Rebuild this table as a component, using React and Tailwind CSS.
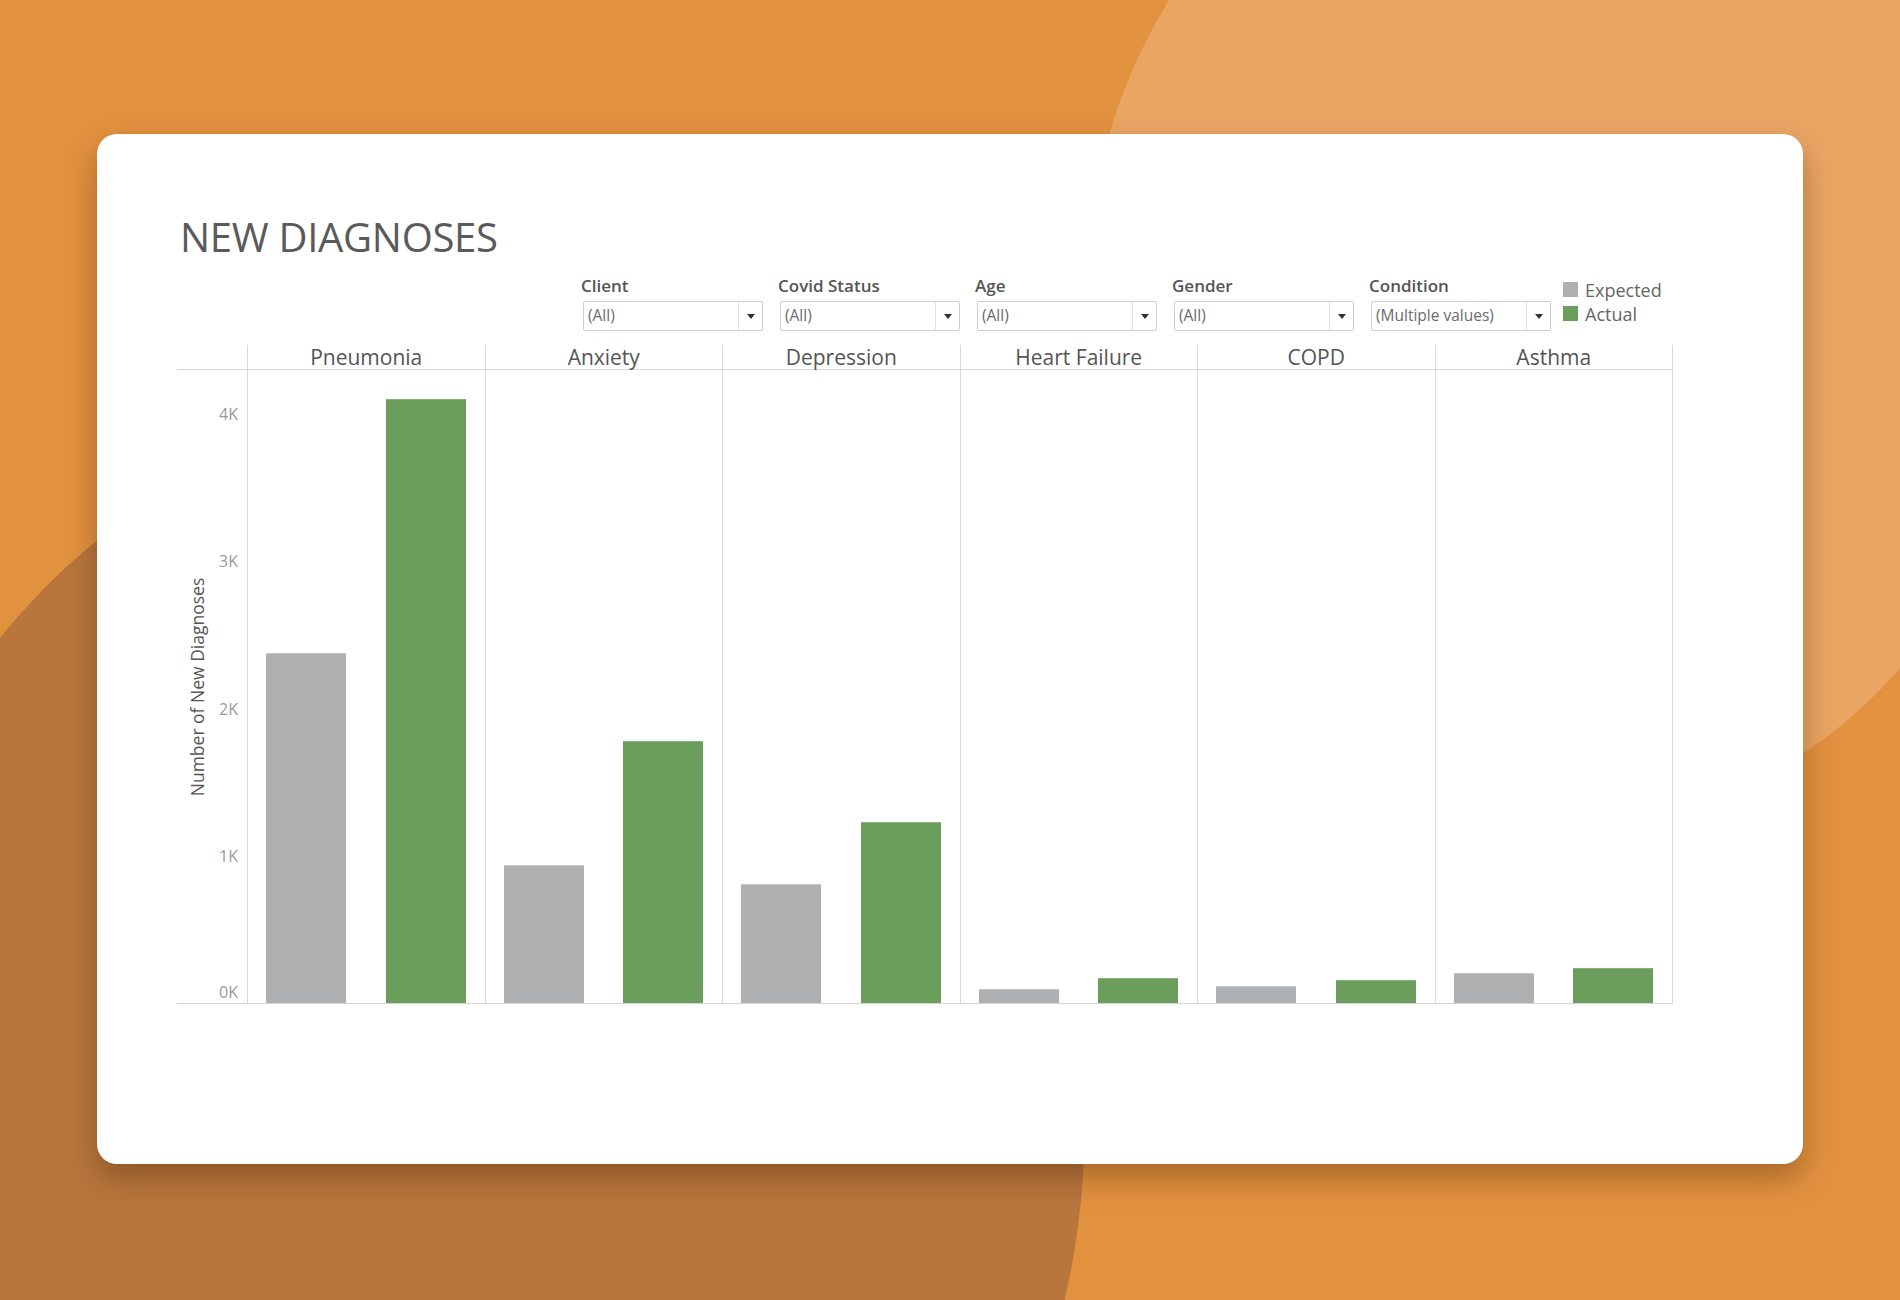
import React from 'react';

// px per 1K on the value axis
const SCALE = 147.2;

const panes = [
  { name: 'Pneumonia', expected: 2378, actual: 4103 },
  { name: 'Anxiety', expected: 938, actual: 1780 },
  { name: 'Depression', expected: 808, actual: 1230 },
  { name: 'Heart Failure', expected: 95, actual: 170 },
  { name: 'COPD', expected: 115, actual: 156 },
  { name: 'Asthma', expected: 204, actual: 238 },
];

const filters = [
  { label: 'Client', value: '(All)' },
  { label: 'Covid Status', value: '(All)' },
  { label: 'Age', value: '(All)' },
  { label: 'Gender', value: '(All)' },
  { label: 'Condition', value: '(Multiple values)' },
];

const ticks = [
  { label: '4K', bottom: 4 * SCALE - 8 },
  { label: '3K', bottom: 3 * SCALE - 8 },
  { label: '2K', bottom: 2 * SCALE - 8 },
  { label: '1K', bottom: 1 * SCALE - 8 },
  { label: '0K', bottom: 3 },
];

const Filter = ({ label, value }) => (
  <div className="w-[182px] flex flex-col">
    <div className="text-[17px] leading-none h-[15px] font-semibold text-[#555] whitespace-nowrap">{label}</div>
    <div className="ml-[2px] mt-[9px] h-[30px] flex items-stretch border border-[#cfcfcf] rounded-[2px] bg-white">
      <div className="flex-1 flex items-center pl-[4px] text-[15.5px] text-[#6b6b6b] whitespace-nowrap">{value}</div>
      <div className="w-[24px] border-l border-[#e2e2e2] flex items-center justify-center">
        <div className="w-0 h-0 border-l-[4px] border-r-[4px] border-t-[5px] border-l-transparent border-r-transparent border-t-[#333]"></div>
      </div>
    </div>
  </div>
);

const App = () => {
  return (
    <div className="relative w-[1900px] h-[1300px] overflow-hidden bg-[#e2913f] font-['Open_Sans',sans-serif]">
      {/* background blobs */}
      <svg className="absolute inset-0" width="1900" height="1300" viewBox="0 0 1900 1300">
        <ellipse cx="1560" cy="300" rx="475" ry="528" fill="#eaa563" />
        <ellipse cx="460" cy="1120" rx="625" ry="712" fill="#b8763d" />
      </svg>

      <div className="relative pt-[134px] pl-[97px]">
        <div className="w-[1706px] h-[1030px] bg-white rounded-[20px] shadow-[0_14px_30px_rgba(60,30,0,0.35)] pl-[80px] pt-[83px]">
          <h1 className="ml-[3px] text-[40px] tracking-[-0.3px] leading-none h-[40px] text-[#5a5a5a] font-normal">NEW DIAGNOSES</h1>

          {/* filters + legend */}
          <div className="mt-[20px] ml-[404px] flex">
            <div className="flex gap-[15px]">
              {filters.map((f) => (
                <Filter key={f.label} {...f} />
              ))}
            </div>
            <div className="ml-[12px] pt-[5px] flex flex-col gap-[9px]">
              <div className="flex items-center gap-[7px] h-[15px]">
                <div className="w-[15px] h-[15px] bg-[#aeb0b1]"></div>
                <span className="text-[18px] leading-none text-[#666]">Expected</span>
              </div>
              <div className="flex items-center gap-[7px] h-[15px]">
                <div className="w-[15px] h-[15px] bg-[#6a9e5a]"></div>
                <span className="text-[18px] leading-none text-[#666]">Actual</span>
              </div>
            </div>
          </div>

          {/* chart */}
          <div className="mt-[14px] w-[1496px]">
            <div className="flex h-[25px] border-b border-[#d9d9d9]">
              <div className="w-[70px]"></div>
              {panes.map((p, i) => (
                <div
                  key={p.name}
                  className={`w-[237.5px] border-l border-[#d9d9d9] text-center text-[21px] leading-[24px] text-[#555] whitespace-nowrap ${i === panes.length - 1 ? 'border-r w-[238.5px]' : ''}`}
                >
                  {p.name}
                </div>
              ))}
            </div>
            <div className="flex h-[634px] border-b border-[#d4d4d4]">
              <div className="relative w-[70px]">
                <div className="absolute left-[20px] top-1/2 -translate-x-1/2 -translate-y-1/2 -rotate-90 whitespace-nowrap text-[17.5px] text-[#555]">
                  Number of New Diagnoses
                </div>
                {ticks.map((t) => (
                  <div
                    key={t.label}
                    className="absolute right-[9px] text-[16px] leading-[16px] text-[#9a9a9a]"
                    style={{ bottom: t.bottom }}
                  >
                    {t.label}
                  </div>
                ))}
              </div>
              {panes.map((p, i) => (
                <div
                  key={p.name}
                  className={`w-[237.5px] border-l border-[#d9d9d9] pl-[18px] pr-[19px] flex items-end justify-between ${i === panes.length - 1 ? 'border-r w-[238.5px]' : ''}`}
                >
                  <div
                    className="w-[80px] bg-[#aeb0b1] border-t border-[#c4c6c7]"
                    style={{ height: (p.expected / 1000) * SCALE }}
                  ></div>
                  <div
                    className="w-[80px] bg-[#6a9e5a] border-t border-[#86b277]"
                    style={{ height: (p.actual / 1000) * SCALE }}
                  ></div>
                </div>
              ))}
            </div>
          </div>
        </div>
      </div>
    </div>
  );
};

export default App;
